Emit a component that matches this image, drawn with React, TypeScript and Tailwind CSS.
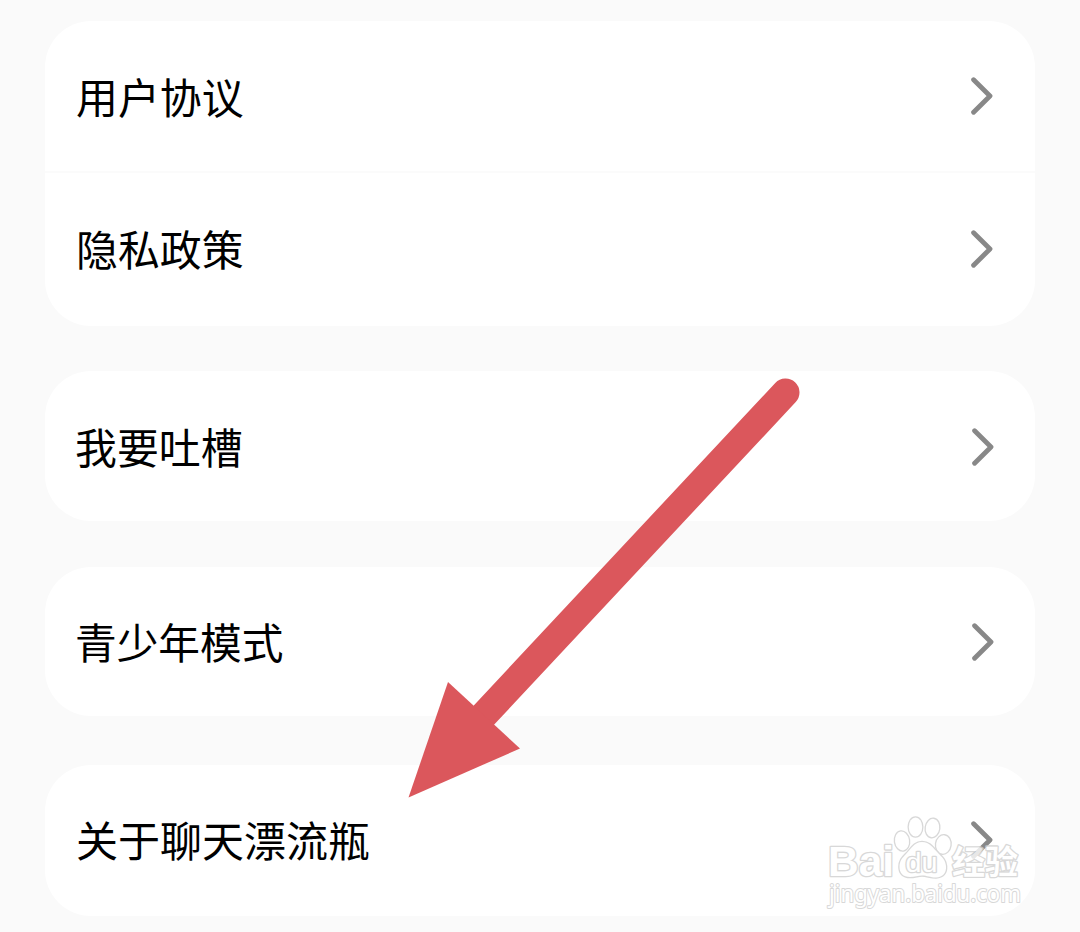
interface CardGroup {
  id: string;
  className: string;
  items: { label: string; rowClassName: string; labelClassName: string }[];
}

const groups: CardGroup[] = [
  {
    id: 'legal',
    className: 'mb-[45px]',
    items: [
      {
        label: '用户协议',
        rowClassName: 'h-[150px] pl-[31px] pr-[42px]',
        labelClassName: 'text-[41.9px] pb-[1px]',
      },
      {
        label: '隐私政策',
        rowClassName: 'h-[155px] pl-[31px] pr-[42px] pb-[2px] border-t-2 border-[#fbfbfb]',
        labelClassName: 'text-[41.9px] pb-[1px]',
      },
    ],
  },
  {
    id: 'feedback',
    className: 'mb-[46px]',
    items: [
      {
        label: '我要吐槽',
        rowClassName: 'h-[150px] pl-[30px] pr-[41px] pt-[2px]',
        labelClassName: 'text-[41.9px] pb-[2px]',
      },
    ],
  },
  {
    id: 'youth',
    className: 'mb-[49px]',
    items: [
      {
        label: '青少年模式',
        rowClassName: 'h-[149px] pl-[30px] pr-[41px]',
        labelClassName: 'text-[41.7px] pb-[2px]',
      },
    ],
  },
  {
    id: 'about',
    className: '',
    items: [
      {
        label: '关于聊天漂流瓶',
        rowClassName: 'h-[151px] pl-[31px] pr-[42px] pb-[2px]',
        labelClassName: 'text-[42px] pb-[2px]',
      },
    ],
  },
];

function Chevron() {
  return (
    <svg width="22" height="38" viewBox="0 0 22 38" fill="none">
      <path
        d="M2.6 2.8 L19 19 L2.6 35.2"
        stroke="#888888"
        strokeWidth="4.8"
        strokeLinecap="round"
        strokeLinejoin="round"
      />
    </svg>
  );
}

function Arrow() {
  return (
    <svg
      className="absolute left-[400px] top-[370px] pointer-events-none"
      width="410"
      height="435"
      viewBox="400 370 410 435"
    >
      <path d="M484 715 L785.5 392.5" stroke="#db575c" strokeWidth="28" strokeLinecap="round" />
      <path d="M408.5 797.5 L448 682 L520 748.5 Z" fill="#db575c" />
    </svg>
  );
}

function Watermark() {
  return (
    <svg
      className="absolute left-[820px] top-[810px] pointer-events-none"
      width="210"
      height="105"
      viewBox="820 810 210 105"
      fill="#ffffff"
      stroke="#cfcfcf"
      strokeWidth="2.6"
      strokeLinejoin="round"
      paintOrder="stroke"
      opacity="0.8"
    >
      <text
        x="828"
        y="876"
        fontSize="42"
        textLength="66"
        lengthAdjust="spacingAndGlyphs"
        className="font-['Liberation_Sans',sans-serif] font-bold"
      >
        Bai
      </text>

      {/* paw */}
      <ellipse cx="902" cy="841" rx="7" ry="9.5" transform="rotate(-8 902 841)" />
      <ellipse cx="915.5" cy="827" rx="6.7" ry="9.5" />
      <ellipse cx="932.5" cy="828" rx="6.7" ry="9.2" transform="rotate(8 932.5 828)" />
      <ellipse cx="943.3" cy="844.5" rx="7.2" ry="9.2" transform="rotate(8 943.3 844.5)" />
      <path d="M922 842 C914 842 911 849 906 854 C902 858 899.5 861 899.5 867 C899.5 873 903 877 910 877 C915 877 918 875.5 922 875.5 C927 875.5 930 877.5 936 877.5 C943 877 946.5 873 946 866 C945.5 860 942 857 938 853 C933 848 930 842 922 842 Z" />
      <text
        x="905.5"
        y="871.5"
        fontSize="27"
        textLength="32"
        lengthAdjust="spacingAndGlyphs"
        className="font-['Liberation_Sans',sans-serif]"
      >
        du
      </text>

      <text
        x="952"
        y="873.5"
        fontSize="33"
        textLength="66"
        className="font-['Noto_Sans_CJK_SC',sans-serif] font-bold"
      >
        经验
      </text>
      <text
        x="829"
        y="902"
        fontSize="23"
        strokeWidth="2"
        textLength="192"
        lengthAdjust="spacingAndGlyphs"
        className="font-['Noto_Sans',sans-serif]"
      >
        jingyan.baidu.com
      </text>
    </svg>
  );
}

export default function App() {
  return (
    <div className="relative w-[1080px] h-[932px] overflow-hidden bg-[#fafafa] pt-[21px] px-[45px] font-['Noto_Sans_CJK_SC',sans-serif]">
      {groups.map((group) => (
        <div key={group.id} className={`bg-white rounded-[46px] overflow-hidden ${group.className}`}>
          {group.items.map((item) => (
            <div
              key={item.label}
              className={`flex items-center justify-between ${item.rowClassName}`}
            >
              <span className={`leading-[60px] text-black ${item.labelClassName}`}>
                {item.label}
              </span>
              <Chevron />
            </div>
          ))}
        </div>
      ))}

      <Arrow />
      <Watermark />
    </div>
  );
}
